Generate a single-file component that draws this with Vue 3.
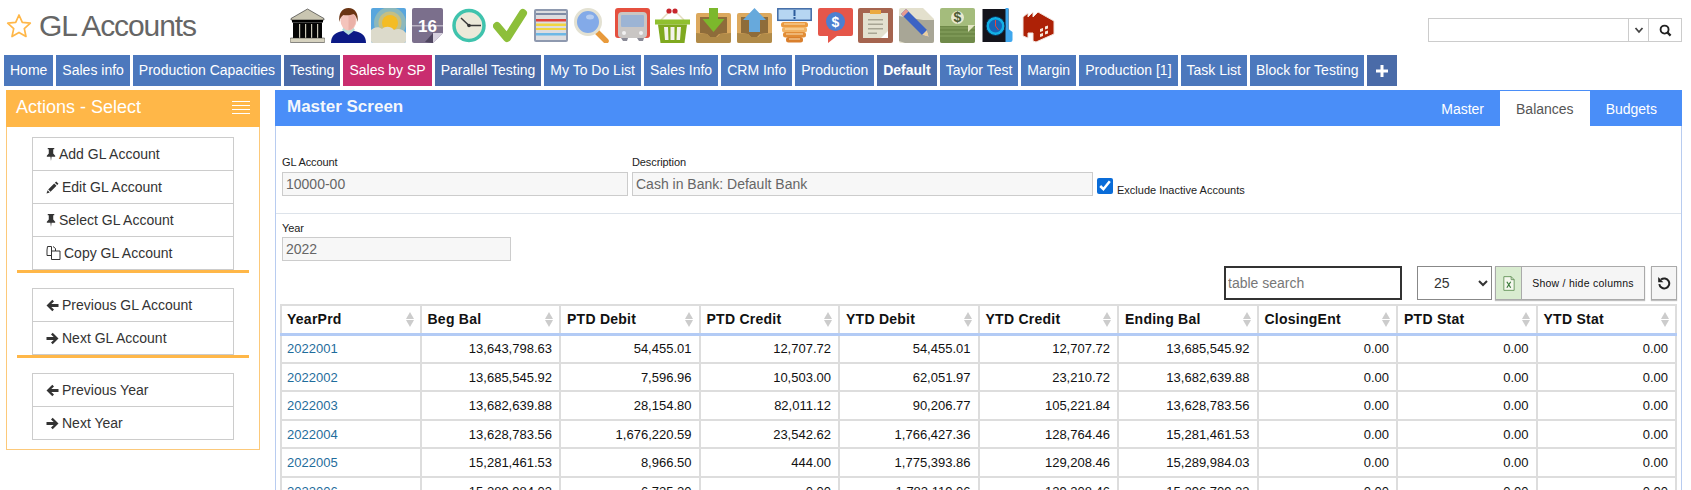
<script setup>
const tabs = [
  { name: 'Home' }, { name: 'Sales info' }, { name: 'Production Capacities' },
  { name: 'Testing', kind: 'dark' }, { name: 'Sales by SP', kind: 'pink' },
  { name: 'Parallel Testing', kind: 'dark' }, { name: 'My To Do List' }, { name: 'Sales Info' },
  { name: 'CRM Info' }, { name: 'Production' }, { name: 'Default', kind: 'active' },
  { name: 'Taylor Test' }, { name: 'Margin' }, { name: 'Production [1]' },
  { name: 'Task List' }, { name: 'Block for Testing' }
]

const actionGroups = [
  [
    { label: 'Add GL Account', icon: 'pin' },
    { label: 'Edit GL Account', icon: 'pencil' },
    { label: 'Select GL Account', icon: 'pin' },
    { label: 'Copy GL Account', icon: 'copy' }
  ],
  [
    { label: 'Previous GL Account', icon: 'left' },
    { label: 'Next GL Account', icon: 'right' }
  ],
  [
    { label: 'Previous Year', icon: 'left' },
    { label: 'Next Year', icon: 'right' }
  ]
]

const columns = ['YearPrd', 'Beg Bal', 'PTD Debit', 'PTD Credit', 'YTD Debit', 'YTD Credit', 'Ending Bal', 'ClosingEnt', 'PTD Stat', 'YTD Stat']

const rows = [
  ['2022001', '13,643,798.63', '54,455.01', '12,707.72', '54,455.01', '12,707.72', '13,685,545.92'],
  ['2022002', '13,685,545.92', '7,596.96', '10,503.00', '62,051.97', '23,210.72', '13,682,639.88'],
  ['2022003', '13,682,639.88', '28,154.80', '82,011.12', '90,206.77', '105,221.84', '13,628,783.56'],
  ['2022004', '13,628,783.56', '1,676,220.59', '23,542.62', '1,766,427.36', '128,764.46', '15,281,461.53'],
  ['2022005', '15,281,461.53', '8,966.50', '444.00', '1,775,393.86', '129,208.46', '15,289,984.03'],
  ['2022006', '15,289,984.03', '6,725.20', '0.00', '1,782,119.06', '129,208.46', '15,296,709.23']
]
</script>

<template>
  <div class="page">
    <header class="topbar">
      <div class="brand">
        <svg class="star" viewBox="0 0 26 26">
          <path d="M13 2l3.3 7.4 8 .8-6 5.4 1.7 7.9-7-4.1-7 4.1 1.7-7.9-6-5.4 8-.8z" fill="none" stroke="#ffb748" stroke-width="1.7" stroke-linejoin="round" />
        </svg>
        <h1>GL Accounts</h1>
      </div>

      <!-- shortcut icons -->
      <div class="shortcuts">
        <svg viewBox="0 0 35 35">
          <path d="M17.5 1L34 10.5V12H1v-1.500z" fill="#c9c5b1" stroke="#222" stroke-width=".6" />
          <rect x="2" y="12" width="31" height="2.500" fill="#000" />
          <path d="M3 14.500h29V30H3z" fill="#050505" />
          <path d="M9 16h1.200v14H9zM15 16h1.200v14H15zM21 16h1.200v14H21zM27 16h1.200v14H27z" fill="#c9c6b6" />
          <rect x="0" y="30" width="35" height="4.500" rx="1" fill="#d6d2bf" stroke="#222" stroke-width=".5" />
        </svg>
        <svg viewBox="0 0 35 35">
          <path d="M0 35c0-8 5-11 12-12h11c7 1 12 4 12 12z" fill="#0c1a86" />
          <path d="M11 22l6.500 5 6.500-5-2-3H13z" fill="#b5dcd8" />
          <ellipse cx="17.500" cy="12.500" rx="8" ry="10" fill="#f4c4bc" />
          <path d="M17.500 3v19c4 0 7-5 7-9.500S22 3 17.500 3z" fill="#eab1a8" />
          <path d="M8.500 14C7 6 11 0 17.500 0S28 6 26.500 14c-.5-4-2-7-4-8-3 1.500-8 1.500-10 1-2 1-3.500 3-4 7z" fill="#6a3413" />
        </svg>
        <svg viewBox="0 0 35 35">
          <defs>
            <clipPath id="sky"><rect width="35" height="35" rx="2" /></clipPath>
          </defs>
          <g clip-path="url(#sky)">
            <rect width="35" height="35" fill="#58a6de" />
            <circle cx="19" cy="15" r="16" fill="#8cb8bc" />
            <circle cx="19" cy="15" r="11.500" fill="#c5bf84" />
            <circle cx="19" cy="15" r="8" fill="#f4bc25" />
            <path d="M0 22c3-3 8-4 11-1 3-3 9-3 12 1 4-2 9-1 12 3v10H0z" fill="#dcdacb" />
          </g>
        </svg>
        <svg viewBox="0 0 35 35">
          <path d="M2 0h27a2 2 0 0 1 2 2v23L21 35H2a2 2 0 0 1-2-2V2a2 2 0 0 1 2-2z" fill="#7b6f8c" />
          <path d="M0 17h31v1.500H0z" fill="#b9b2c3" />
          <text x="15.500" y="24" class="cal-day">16</text>
          <path d="M21 35l10-10H21z" fill="#d6d0de" />
          <path d="M21 25v10l-8-1z" fill="#4f4660" />
        </svg>
        <svg viewBox="0 0 35 35">
          <circle cx="17" cy="17.500" r="15" fill="#ece9d9" stroke="#3fc3ad" stroke-width="3.500" />
          <path d="M9 10l8 7.500H29" fill="none" stroke="#3a3a3a" stroke-width="1.500" />
          <circle cx="17" cy="17.500" r="1.800" fill="#333" />
        </svg>
        <svg viewBox="0 0 35 35">
          <path d="M4 18l10 12L30 5" fill="none" stroke="#8dbf3a" stroke-width="8" stroke-linecap="round" stroke-linejoin="round" />
        </svg>
        <svg viewBox="0 0 35 35">
          <rect y="1" width="34" height="33" rx="2" fill="#8e99af" />
          <rect x="2" y="3" width="30" height="29" fill="#dcdde0" />
          <path d="M2 5h30v2H2z" fill="#7f8ba5" />
          <path d="M2 11h30v2.500H2z" fill="#e0433c" />
          <path d="M2 15.500h30v2.500H2zM2 20h30v2H2z" fill="#f1d542" />
          <path d="M2 25h30v2.500H2z" fill="#6cb8e6" />
        </svg>
        <svg viewBox="0 0 35 35">
          <path d="M22 23l10 10" stroke="#e89a3c" stroke-width="5.500" stroke-linecap="round" />
          <circle cx="14" cy="14" r="12.500" fill="#83aae8" stroke="#e3e1d2" stroke-width="3" />
          <ellipse cx="16" cy="9" rx="4" ry="2.500" fill="#b6cdf0" />
        </svg>
        <svg viewBox="0 0 35 35">
          <rect width="35" height="30" rx="3" fill="#e5503f" />
          <rect x="3" y="4" width="29" height="26" rx="4" fill="#c9c6c4" />
          <rect x="6" y="7" width="23" height="12" rx="1" fill="#9cb4d4" />
          <circle cx="9" cy="25" r="2" fill="#f1f1f1" />
          <circle cx="26" cy="25" r="2" fill="#f1f1f1" />
          <path d="M6 30h7l-1 3H8zM22 30h7l-1 3h-4z" fill="#8a8a96" />
        </svg>
        <svg viewBox="0 0 35 35">
          <path d="M6 12L14 4M29 12l-8-8" stroke="#e4ddc0" stroke-width="1.500" />
          <circle cx="14" cy="3" r="2.600" fill="#c7262c" />
          <circle cx="20" cy="3" r="2.600" fill="#c7262c" />
          <path d="M0 11.500h35v5H0z" fill="#90c02f" />
          <path d="M3 16.500h29L29.500 35h-24z" fill="#7fa91f" />
          <path d="M9 19h4l.5 13H10zM15.500 19h4v13h-4zM22 19h4l-1 13h-3.500z" fill="#f3f3ea" />
        </svg>
        <svg viewBox="0 0 35 35">
          <rect y="5" width="35" height="30" rx="2" fill="#dca95e" />
          <path d="M4 9h27v16l-8 1-3 3h-6l-3-3-7-1z" fill="#8e6c3a" />
          <path d="M0 25l11 1 3 3h7l3-3 11-1v8a2 2 0 0 1-2 2H2a2 2 0 0 1-2-2z" fill="#b08a48" />
          <path d="M13 0h9v11h6.500L17.500 24 6.500 11H13z" fill="#7cb82c" />
        </svg>
        <svg viewBox="0 0 35 35">
          <rect y="5" width="35" height="30" rx="2" fill="#dca95e" />
          <path d="M4 9h27v16l-8 1-3 3h-6l-3-3-7-1z" fill="#8e6c3a" />
          <path d="M0 25l11 1 3 3h7l3-3 11-1v8a2 2 0 0 1-2 2H2a2 2 0 0 1-2-2z" fill="#b08a48" />
          <path d="M17.500 0L29 12h-6v12H12V12H6z" fill="#67a9dc" />
        </svg>
        <svg viewBox="0 0 35 35">
          <rect x=".8" y=".8" width="33.400" height="11.500" fill="#b6d6f2" stroke="#3f6aa6" stroke-width="1.500" />
          <path d="M16.500 2h2v6h-2zM16.500 9h2v2h-2z" fill="#2c5c9c" />
          <rect x="4" y="14" width="27" height="5.500" rx="2.500" fill="#ea9a41" />
          <rect x="5" y="19" width="25" height="5.500" rx="2.500" fill="#f2b465" />
          <rect x="6" y="24" width="23" height="5.500" rx="2.500" fill="#e28d36" />
          <rect x="9" y="29" width="17" height="5.500" rx="2.500" fill="#d97f2c" />
          <path d="M7 16h21M8 21h19M9 26h17M12 31h11" stroke="#fae0b4" stroke-width="1.200" />
        </svg>
        <svg viewBox="0 0 35 35">
          <path d="M2 0h31a2 2 0 0 1 2 2v24a2 2 0 0 1-2 2H19l-9 7v-7H2a2 2 0 0 1-2-2V2a2 2 0 0 1 2-2z" fill="#e5564a" />
          <circle cx="17.500" cy="13.500" r="9.500" fill="#4b7fd1" />
          <text x="17.500" y="18.500" class="coin-sign light">$</text>
        </svg>
        <svg viewBox="0 0 35 35">
          <rect width="35" height="35" rx="2" fill="#a5644f" />
          <path d="M5 5h25v25H5z" fill="#e3e0cf" />
          <path d="M12 2h11v4H12z" fill="#eba941" />
          <path d="M10 11h15v1.500H10zM10 15.500h15V17H10zM10 20h15v1.500H10zM10 24.500h9V26h-9z" fill="#a8a594" />
          <path d="M23 30l7-7v7z" fill="#fff" />
        </svg>
        <svg viewBox="0 0 35 35">
          <path d="M2 0h22l11 11v22a2 2 0 0 1-2 2H2a2 2 0 0 1-2-2V2a2 2 0 0 1 2-2z" fill="#e3e0cd" />
          <path d="M24 12h11v21a2 2 0 0 1-2 2H6L0 33V8z" fill="#a8a696" />
          <path d="M7 1l-5 5 21 21 7 2-2-7z" fill="#3c63c4" />
          <path d="M7 1L2 6l2.500 2.500 5-5z" fill="#e79a8f" />
          <path d="M23 27l7 2-2-7z" fill="#ebcf9f" />
        </svg>
        <svg viewBox="0 0 35 35">
          <rect width="35" height="35" rx="2" fill="#a4bc7c" />
          <path d="M0 18h35v15a2 2 0 0 1-2 2H2a2 2 0 0 1-2-2z" fill="#6f8a49" />
          <path d="M0 20h35M0 24h35M0 28h35" stroke="#8aa463" stroke-width="1" />
          <circle cx="17.500" cy="9.500" r="6.500" fill="#e8e9d0" />
          <text x="17.500" y="14" class="coin-sign dark">$</text>
          <path d="M28 24l7-7h-7z" fill="#e3e6c4" />
        </svg>
        <svg viewBox="0 0 30 35">
          <rect y="1" width="26" height="33" fill="#14141c" />
          <path d="M23 0h3v21l4 3v8a2 2 0 0 1-2 2h-5z" fill="#3fa7ee" />
          <circle cx="13" cy="18" r="9.500" fill="#12b0e6" stroke="#0a2a50" stroke-width="1" />
          <circle cx="13" cy="18" r="6.500" fill="#1665b8" />
          <path d="M13 12v6l3 4" fill="none" stroke="#e8443c" stroke-width="1" />
        </svg>
        <svg viewBox="0 0 33 35">
          <path d="M1 9l5-4v4l5-5v5l5-5 16 9v13L14 34l-3-1v-8H6v5l-5-2z" fill="#ad2106" stroke="#f2e6e0" stroke-width="1" />
          <path d="M18 21l3-1v3l-3 1zM23 18.500l3-1v3l-3 1zM18 26l3-1v3l-3 1zM23 23.500l3-1v3l-3 1z" fill="#f7e7d8" />
        </svg>
      </div>

      <div class="site-search">
        <input type="text" />
        <button class="dd">
          <svg viewBox="0 0 10 10"><path d="M1.500 3l3.500 4 3.500-4" fill="none" stroke="#444" stroke-width="1.800" /></svg>
        </button>
        <button class="go">
          <svg viewBox="0 0 14 14"><circle cx="6" cy="6" r="4.300" fill="none" stroke="#222" stroke-width="2" /><path d="M9 9l3.500 3.500" stroke="#222" stroke-width="2.400" /></svg>
        </button>
      </div>
    </header>

    <nav class="tabbar">
      <a v-for="t in tabs" :key="t.name" class="tab" :class="t.kind">{{ t.name }}</a>
      <a class="tab dark plus">
        <svg viewBox="0 0 12 12"><path d="M4.500 0h3v4.500H12v3H7.500V12h-3V7.500H0v-3h4.500z" fill="#fff" /></svg>
      </a>
    </nav>

    <div class="content">
      <aside class="actions">
        <div class="actions-head">
          <span>Actions - Select</span>
          <span class="burger"><i></i><i></i><i></i><i></i></span>
        </div>

        <div class="actions-body">
          <template v-for="(group, i) in actionGroups" :key="i">
            <ul class="action-list">
              <li v-for="a in group" :key="a.label">
                <svg v-if="a.icon === 'pin'" class="ic-pin" viewBox="0 0 10 14"><path d="M1.500 0h7v1.300H7.400V6L9.500 8.300v1H5.600L5 14l-.6-4.700H.5v-1L2.600 6V1.300H1.500z" /></svg>
                <svg v-else-if="a.icon === 'pencil'" class="ic-wide" viewBox="0 0 13 13"><path d="M10.200.5l2.300 2.300-1.300 1.300-2.300-2.300zM8.200 2.500l2.300 2.300-6 6-2.300-2.300zM1.600 9.200l2.200 2.200-3.300 1.100z" /></svg>
                <svg v-else-if="a.icon === 'copy'" class="ic-copy" viewBox="0 0 14 14"><path d="M5 .5H1L.5 4v5.500H5M5 5h4l4.500 0v8.500H5zM5 .5v4.500M9 5V2.500L6.500.5" fill="none" stroke="#333" stroke-width="1" /></svg>
                <svg v-else-if="a.icon === 'left'" class="ic-wide" viewBox="0 0 13 13"><path d="M6.300.8l1.700 1.700-2.700 2.600H12.500v2.800H5.300L8 10.500l-1.700 1.700L.5 6.500z" /></svg>
                <svg v-else class="ic-wide" viewBox="0 0 13 13"><path d="M6.700.8L5 2.500l2.700 2.600H.5v2.800h7.200L5 10.500l1.700 1.700 5.800-5.700z" /></svg>
                <span>{{ a.label }}</span>
              </li>
            </ul>
            <div v-if="i < actionGroups.length - 1" class="action-sep"></div>
          </template>
        </div>
      </aside>

      <main class="master">
        <div class="master-head">
          <h2>Master Screen</h2>
          <div class="master-tabs">
            <a>Master</a>
            <a class="on">Balances</a>
            <a>Budgets</a>
          </div>
        </div>

        <div class="field-row">
          <div class="field gl">
            <label>GL Account</label>
            <input type="text" value="10000-00" readonly />
          </div>
          <div class="field desc">
            <label>Description</label>
            <input type="text" value="Cash in Bank: Default Bank" readonly />
          </div>
          <label class="exclude">
            <input type="checkbox" checked />
            <span>Exclude Inactive Accounts</span>
          </label>
        </div>

        <div class="year-row">
          <div class="field year">
            <label>Year</label>
            <input type="text" value="2022" readonly />
          </div>
        </div>

        <div class="toolbar">
          <input class="table-search" type="text" placeholder="table search" />
          <select class="page-size">
            <option>25</option>
          </select>
          <div class="btn-group">
            <button class="xls">
              <svg viewBox="0 0 14 17">
                <path d="M1 .5h8.500L13 4v12.500H1z" fill="#f5f8ee" stroke="#5d8f52" />
                <path d="M9.500.5V4H13" fill="none" stroke="#5d8f52" />
                <path d="M4.500 6.500l4.500 7M9 6.500l-4.500 7" stroke="#3a7a3a" stroke-width="1.400" />
              </svg>
            </button>
            <button class="cols">Show / hide columns</button>
          </div>
          <button class="reload">
            <svg viewBox="0 0 14 14"><path d="M4 3.600a5 5 0 1 1-1.700 4.600" fill="none" stroke="#222" stroke-width="2" /><path d="M1.200 1v5.200h5.200z" fill="#222" /></svg>
          </button>
        </div>

        <table class="grid">
          <thead>
            <tr>
              <th v-for="c in columns" :key="c">
                <div class="th-in">
                  <span>{{ c }}</span>
                  <span class="sort"><i class="up"></i><i class="down"></i></span>
                </div>
              </th>
            </tr>
          </thead>
          <tbody>
            <tr v-for="r in rows" :key="r[0]">
              <td class="link">{{ r[0] }}</td>
              <td v-for="(v, i) in r.slice(1)" :key="i">{{ v }}</td>
              <td>0.00</td>
              <td>0.00</td>
              <td>0.00</td>
            </tr>
          </tbody>
        </table>
      </main>
    </div>
  </div>
</template>

<style>
html, body {
  margin: 0;
  height: 490px;
  overflow: hidden;
  background: #fff;
}
</style>

<style scoped>
.page {
  font-family: "Liberation Sans", Arial, sans-serif;
  font-size: 14px;
  color: #333;
  width: 1691px;
  height: 490px;
  overflow: hidden;
}

/* top bar */
.topbar {
  display: flex;
  height: 55px;
}
.brand {
  display: flex;
  align-items: center;
  gap: 7px;
  width: 284px;
  height: 52px;
  margin-left: 6px;
}
.star { width: 26px; height: 26px; }
.brand h1 {
  margin: 0;
  font-size: 30px;
  font-weight: 400;
  letter-spacing: -1.1px;
  color: #666;
}
.shortcuts {
  display: flex;
  gap: 5.6px;
  margin-top: 8px;
  height: 35px;
}
.shortcuts svg { width: 35px; height: 35px; display: block; }
.cal-day {
  font-family: "Liberation Sans", Arial, sans-serif;
  font-size: 17px;
  font-weight: 700;
  fill: #fff;
  text-anchor: middle;
}
.coin-sign {
  font-family: "Liberation Sans", Arial, sans-serif;
  font-size: 14px;
  font-weight: 700;
  text-anchor: middle;
}
.coin-sign.light { fill: #fff; }
.coin-sign.dark { fill: #4d5b34; }

.site-search {
  display: flex;
  margin: 18px 9px 0 auto;
  height: 24px;
}
.site-search input {
  width: 201px;
  height: 24px;
  box-sizing: border-box;
  border: 1px solid #ccc;
  padding: 0 4px;
}
.site-search button {
  height: 24px;
  box-sizing: border-box;
  background: #fff;
  border: 1px solid #ccc;
  border-left: none;
  padding: 0;
  display: flex;
  align-items: center;
  justify-content: center;
}
.site-search .dd { width: 20px; }
.site-search .dd svg { width: 10px; height: 10px; }
.site-search .go { width: 33px; }
.site-search .go svg { width: 13px; height: 13px; }

/* tabs */
.tabbar {
  display: flex;
  gap: 3px;
  height: 31px;
  padding-left: 4px;
}
.tab {
  display: flex;
  align-items: center;
  padding: 0 6px 2px;
  background: #4c78bd;
  color: #fff;
  font-size: 14px;
  white-space: nowrap;
}
.tab.dark { background: #4a6ba8; }
.tab.pink { background: #c92d6f; }
.tab.active { background: #4a6ba8; font-weight: 700; }
.tab.plus { width: 30px; box-sizing: border-box; justify-content: center; padding: 0; }
.tab.plus svg { width: 12px; height: 12px; }

.content {
  display: flex;
  margin-top: 4px;
}

/* actions panel */
.actions {
  width: 254px;
  height: 360px;
  margin-left: 6px;
  box-sizing: border-box;
  border: 1px solid #fcc97a;
  border-top: none;
  flex: none;
}
.actions-head {
  display: flex;
  justify-content: space-between;
  align-items: center;
  height: 37px;
  padding: 0 10px 2px;
  box-sizing: border-box;
  margin: 0 -1px;
  background: #ffb748;
  color: #fff;
  font-size: 18px;
}
.burger { display: flex; flex-direction: column; gap: 3px; width: 18px; }
.burger i { display: block; height: 1px; background: #fff; }
.actions-body { padding-top: 10px; }
.action-list {
  list-style: none;
  margin: 0 0 0 25px;
  padding: 0;
  width: 202px;
  box-sizing: border-box;
  border: 1px solid #ccc;
  border-bottom: none;
}
.action-list li {
  display: flex;
  align-items: center;
  height: 33px;
  box-sizing: border-box;
  padding-left: 13px;
  border-bottom: 1px solid #ccc;
}
.action-list svg { fill: #333; flex: none; margin-right: 3px; }
.ic-pin { width: 10px; height: 13px; }
.ic-wide { width: 13px; height: 13px; }
.ic-copy { width: 15px; height: 14px; }
.action-sep {
  height: 3px;
  margin: 0 0 15px 10px;
  width: 232px;
  background: #ffb748;
}

/* master screen */
.master {
  width: 1407px;
  margin-left: 15px;
  box-sizing: border-box;
  border-left: 1px solid #b8ccf0;
  border-right: 1px solid #b8ccf0;
  height: 400px;
  flex: none;
}
.master-head {
  display: flex;
  justify-content: space-between;
  align-items: flex-end;
  height: 36px;
  margin: 0 -1px 0 -1px;
  padding-left: 12px;
  background: #4a8ef8;
  color: #fff;
}
.master-head h2 {
  margin: 0 0 2px;
  align-self: center;
  font-size: 17px;
  font-weight: 700;
  color: #f4f7fb;
}
.master-tabs { display: flex; height: 35px; padding-right: 9px; }
.master-tabs a {
  display: flex;
  align-items: center;
  padding: 0 16px;
  font-size: 14px;
}
.master-tabs a.on { background: #fff; color: #555; }

.field-row {
  display: flex;
  padding: 30px 0 17px 6px;
  border-bottom: 1px solid #dde3ea;
}
.field { display: flex; flex-direction: column; }
.field label {
  font-size: 11px;
  line-height: 12px;
  height: 16px;
  color: #222;
  letter-spacing: -.1px;
}
.field input {
  height: 24px;
  box-sizing: border-box;
  width: 100%;
  border: 1px solid #ccc;
  background: #f7f7f7;
  padding: 0 3px;
  color: #666;
  font: 14px "Liberation Sans", Arial, sans-serif;
  outline: none;
}
.field.gl { width: 346px; margin-right: 4px; }
.field.desc { width: 461px; margin-right: 4px; }
.exclude {
  display: flex;
  align-items: flex-end;
  align-self: flex-end;
  height: 24px;
  font-size: 11px;
  line-height: 12px;
  color: #222;
}
.exclude input { width: 16px; height: 16px; margin: 0 4px 2px 0; accent-color: #0a6cd8; }
.year-row { padding: 8px 0 0 6px; }
.field.year { width: 229px; }
.field.year label { height: 15px; }

.toolbar {
  display: flex;
  justify-content: flex-end;
  align-items: stretch;
  height: 34px;
  margin-top: 5px;
  padding-right: 4px;
}
.table-search {
  width: 178px;
  box-sizing: border-box;
  border: 2px solid #333;
  padding: 0 2px;
  font: 14px "Liberation Sans", Arial, sans-serif;
  outline: none;
}
.table-search::placeholder { color: #777; }
.page-size {
  width: 75px;
  margin-left: 15px;
  box-sizing: border-box;
  border: 1px solid #888;
  background: #fff;
  padding-left: 12px;
  font: 14px "Liberation Sans", Arial, sans-serif;
  color: #333;
}
.btn-group { display: flex; margin-left: 3px; box-shadow: 0 1px 1px rgba(0,0,0,.25); }
.btn-group button {
  box-sizing: border-box;
  border: 1px solid #aaa;
  padding: 0;
  font-family: inherit;
}
.xls {
  width: 27px;
  background: #d9ecd0;
  display: flex;
  align-items: center;
  justify-content: center;
}
.xls svg { width: 12px; height: 15px; }
.cols {
  width: 124px;
  margin-left: -1px;
  background: #f5f5f5;
  font-size: 10.500px;
  color: #111;
  letter-spacing: .25px;
}
.reload {
  width: 26px;
  margin-left: 6px;
  box-sizing: border-box;
  border: 1px solid #aaa;
  background: #f5f5f5;
  box-shadow: 0 1px 1px rgba(0,0,0,.25);
  padding: 0;
  display: flex;
  align-items: center;
  justify-content: center;
}
.reload svg { width: 14px; height: 14px; }

/* table */
.grid {
  border-collapse: collapse;
  table-layout: fixed;
  width: 1397px;
  margin: 4px 0 0 4px;
  font-size: 13px;
  color: #111;
}
.grid th, .grid td {
  border: 2px solid #ddd;
  padding: 0 7px 0 6px;
  box-sizing: border-box;
}
.grid th {
  height: 29px;
  text-align: left;
  font-size: 14px;
  letter-spacing: .25px;
  color: #111;
  border-bottom: 3px solid #b3cbf5;
}
.grid th:first-child, .grid td:first-child { padding-left: 5px; }
.th-in {
  display: flex;
  align-items: center;
  justify-content: space-between;
}
.sort {
  display: flex;
  flex-direction: column;
  gap: 1px;
  margin-right: -1px;
}
.sort i {
  display: block;
  width: 0;
  height: 0;
  border-left: 4px solid transparent;
  border-right: 4px solid transparent;
}
.sort .up { border-bottom: 7px solid #ccc; }
.sort .down { border-top: 7px solid #ccc; }
.grid td {
  height: 29px;
  text-align: right;
}
.grid tbody tr:nth-child(even) td { height: 28px; }
.grid td.link { text-align: left; color: #1f6d9c; }
</style>
